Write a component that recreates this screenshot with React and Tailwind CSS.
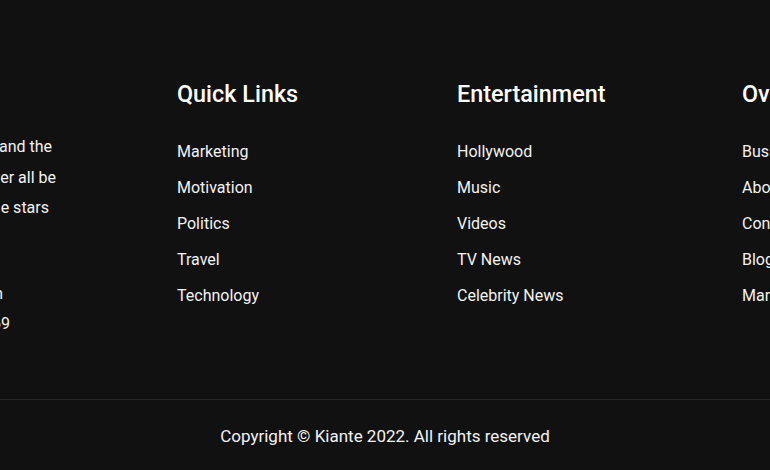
const columns = [
  {
    title: 'Quick Links',
    width: 'w-[280px]',
    links: ['Marketing', 'Motivation', 'Politics', 'Travel', 'Technology'],
  },
  {
    title: 'Entertainment',
    width: 'w-[285px]',
    links: ['Hollywood', 'Music', 'Videos', 'TV News', 'Celebrity News'],
  },
  {
    title: 'Overview',
    width: 'w-[240px]',
    links: ['Business', 'About Us', 'Contact', 'Blog', 'Marketing'],
  },
]

export default function App() {
  return (
    <footer
      className="w-full h-[470px] overflow-hidden bg-[#111111] text-white"
      style={{ fontFamily: 'Roboto, "Noto Sans", sans-serif' }}
    >
      <div className="flex items-start pt-[78px] pb-[59px]">
        {/* about column, most of it sits off the left edge */}
        <div className="w-[177px] shrink-0 mt-[54px] flex flex-col items-end text-base leading-[30.5px] text-[#f2f2f2]">
          <p className="whitespace-nowrap mr-[125px]">Kiante is your daily source for the latest news and the</p>
          <p className="whitespace-nowrap mr-[121px]">stories that matter, because we can never all be</p>
          <p className="whitespace-nowrap mr-[128px]">famous, but we can follow the stars</p>
          <p className="whitespace-nowrap mr-[174px] mt-[55px]">contact@kiante.com</p>
          <p className="whitespace-nowrap mr-[167px]">+1 (555) 123-4569</p>
        </div>

        {columns.map((col) => (
          <div key={col.title} className={`${col.width} shrink-0`}>
            <h3 className="text-[23.4px] leading-8 font-medium whitespace-nowrap">{col.title}</h3>
            <ul className="mt-[30px] flex flex-col gap-3">
              {col.links.map((link) => (
                <li key={link} className="text-base leading-6 text-[#f2f2f2] whitespace-nowrap">
                  {link}
                </li>
              ))}
            </ul>
          </div>
        ))}
      </div>

      <div className="border-t border-[#262626] pt-6 text-center">
        <p className="text-[17px] leading-6 text-[#f2f2f2]">Copyright © Kiante 2022. All rights reserved</p>
      </div>
    </footer>
  )
}
